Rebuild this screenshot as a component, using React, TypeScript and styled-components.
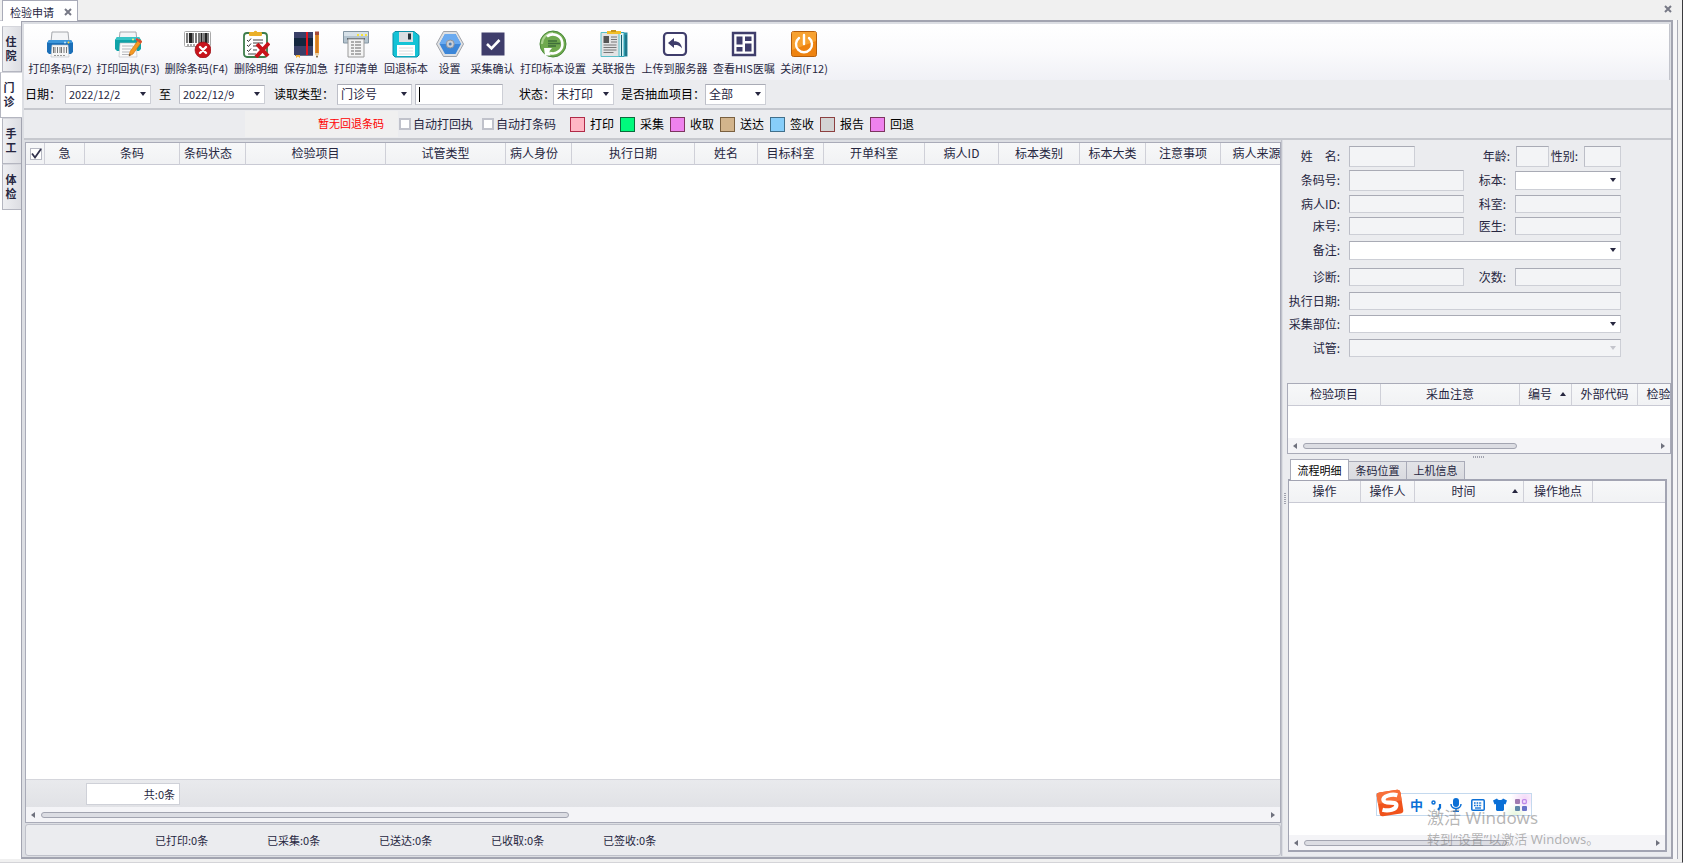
import React from "react";
import styled, { createGlobalStyle, css } from "styled-components";

const ink = "#26263f";
const line = "#a9abb8";
const panel = "#ebecef";

const GlobalStyle = createGlobalStyle`
  * { box-sizing: border-box; }
  body {
    margin: 0;
    background: #f0f0f0;
    color: ${ink};
    font: 12px/16px "Noto Sans CJK SC", "Noto Sans", sans-serif;
  }
  button, input, select { font: inherit; color: inherit; margin: 0; }
  button { border: 0; padding: 0; background: none; }
`;

/* ---------- page frame ---------- */

const Page = styled.div`
  min-height: 100vh;
  display: flex;
  flex-direction: column;
  position: relative;
  border-right: 1px solid #3a3a3e;
  border-bottom: 1px solid #d4d4d8;
`;

const TopBar = styled.header`
  height: 20px;
  display: flex;
  justify-content: space-between;
  align-items: flex-start;
  padding: 0 10px 0 2px;
`;

const DocTab = styled.div`
  height: 21px;
  width: 76px;
  display: flex;
  align-items: center;
  justify-content: space-between;
  padding: 2px 5px 0 7px;
  background: #fff;
  border: 1px solid ${line};
  border-bottom: 0;
  font-size: 11px;
  position: relative;
  z-index: 1;
`;

const CloseButton = styled.button`
  width: 8px;
  height: 18px;
  display: flex;
  align-items: center;
`;

const Body = styled.div`
  flex: 1;
  display: flex;
  padding-right: 4px;
  margin-bottom: 3px;
`;

const SideTabs = styled.nav`
  width: 21px;
  padding-top: 5px;
  background: #fff;
  border-top: 1px solid #c9cad2;
`;

const SideTab = styled.button<{ $active?: boolean }>`
  display: flex;
  align-items: center;
  justify-content: center;
  width: 19px;
  height: 46px;
  margin-left: 2px;
  padding: 0 2px 3px 0;
  font-size: 11px;
  line-height: 14px;
  font-weight: 700;
  background: linear-gradient(90deg, #eeeff2, #dcdde2);
  border: 1px solid #b4b6c0;
  border-top-color: #d5d6dc;
  border-right: 0;
  span { width: 11px; }
  ${(p) =>
    p.$active &&
    css`
      width: 22px;
      margin-left: 0;
      padding-right: 5px;
      background: #fff;
      position: relative;
    `}
`;

const Frame = styled.main`
  flex: 1;
  min-width: 0;
  display: flex;
  flex-direction: column;
  padding: 2px 0 1px 2px;
  background: #dcdee3;
  border: 2px solid #a2a4b0;
  border-left-width: 1px;
`;

const Gutter = styled.div`
  width: 5px;
  background: #f6f6f8;
  border-right: 1px solid #a9abb5;
`;

/* ---------- toolbar ---------- */

const Toolbar = styled.div`
  height: 56px;
  display: flex;
  padding: 6px 2px 0;
  margin-right: 1px;
  background: linear-gradient(#ffffff, #fafafc 50%, #f0f1f6);
  border-right: 1px solid #c3c5cd;
`;

const ToolButton = styled.button<{ $w: number }>`
  width: ${(p) => p.$w}px;
  display: flex;
  flex-direction: column;
  align-items: center;
  gap: 2px;
  font-size: 11px;
  line-height: 16px;
  white-space: nowrap;
  svg { width: 28px; height: 28px; flex: none; }
`;

/* ---------- filters ---------- */

const FilterBar = styled.form`
  height: 30px;
  display: flex;
  align-items: center;
  padding-left: 1px;
  background: ${panel};
  border-bottom: 2px solid #c6c8ce;
  color: #000;
`;

const FilterLabel = styled.label<{ $w: number; $end?: boolean }>`
  width: ${(p) => p.$w}px;
  white-space: nowrap;
  text-align: ${(p) => (p.$end ? "center" : "left")};
`;

const Field = styled.span<{ $w?: number; $h?: number; $off?: boolean }>`
  position: relative;
  display: block;
  ${(p) => (p.$w ? `width: ${p.$w}px;` : "flex: 1;")}
  height: ${(p) => p.$h ?? 18}px;
  background: ${(p) => (p.$off ? "#f3f4f6" : "#fff")};
  border: 1px solid #cdcfd6;
  border-top-color: #a9abb5;
  border-left-color: #bcbec7;
  color: ${ink};
  input, select {
    display: block;
    width: 100%;
    height: 100%;
    padding: 0 4px 0 3px;
    border: 0;
    outline: 0;
    background: none;
    appearance: none;
    line-height: 16px;
  }
`;

const DateInput = styled.input`
  font-size: 11px;
`;

const Arrow = styled.svg<{ $dim?: boolean }>`
  position: absolute;
  right: 4px;
  top: calc(50% - 2px);
  width: 6px;
  height: 4px;
  fill: ${(p) => (p.$dim ? "#c4c5cc" : ink)};
  pointer-events: none;
`;

const Caret = styled.i`
  position: absolute;
  left: 3px;
  top: 2px;
  width: 1px;
  height: 15px;
  background: #000;
`;

const Gap = styled.span<{ $w: number }>`
  width: ${(p) => p.$w}px;
`;

/* ---------- legend ---------- */

const LegendBar = styled.div`
  height: 30px;
  display: flex;
  align-items: center;
  background: ${panel};
  border-bottom: 2px solid #c6c8ce;
  padding-left: 221px;
`;

const Notice = styled.div`
  width: 153px;
  height: 26px;
  padding-right: 14px;
  background: #f0f0f0;
  color: #f00;
  font-size: 11px;
  line-height: 24px;
  text-align: right;
`;

const CheckLabel = styled.label`
  display: flex;
  align-items: center;
  gap: 2px;
  width: 83px;
  padding-left: 1px;
  white-space: nowrap;
`;

const Check = styled.input`
  appearance: none;
  flex: none;
  width: 12px;
  height: 12px;
  border: 2px solid #c0c2cb;
  background: #fff;
`;

const Legend = styled.ul`
  display: flex;
  gap: 6px;
  margin: 0 0 0 6px;
  padding: 0;
  list-style: none;
  color: #000;
`;

const LegendItem = styled.li`
  display: flex;
  align-items: center;
  gap: 5px;
  white-space: nowrap;
`;

const Swatch = styled.span<{ $fill: string; $edge: string }>`
  width: 15px;
  height: 15px;
  background: ${(p) => p.$fill};
  border: 1px solid ${(p) => p.$edge};
`;

/* ---------- work area ---------- */

const Work = styled.div`
  flex: 1;
  display: flex;
  gap: 1px;
  min-height: 0;
`;

const Left = styled.section`
  flex: 1;
  min-width: 0;
  display: flex;
  flex-direction: column;
  padding: 2px 0 0 1px;
  border-right: 1px solid #c0c2cb;
`;

const GridBox = styled.div<{ $h?: number }>`
  ${(p) => (p.$h ? `height: ${p.$h}px;` : "flex: 1;")}
  min-width: 0;
  display: flex;
  flex-direction: column;
  overflow: hidden;
  background: #fff;
  border: 1px solid ${line};
`;

const GridBody = styled.div`
  flex: 1;
  overflow: hidden;
`;

const Table = styled.table<{ $w?: number }>`
  width: ${(p) => (p.$w ? `${p.$w}px` : "100%")};
  table-layout: fixed;
  border-collapse: separate;
  border-spacing: 0;
  th {
    height: 22px;
    padding: 0 0 1px;
    font-weight: 400;
    line-height: 16px;
    white-space: nowrap;
    overflow: hidden;
    background: linear-gradient(#f7f8f9, #f1f2f4);
    border-right: 1px solid #cfd0d8;
    border-bottom: 1px solid #c9cad4;
  }
  th:last-child { border-right: 0; }
`;

const HeadCell = styled.th<{ $start?: boolean }>`
  ${(p) =>
    p.$start &&
    css`
      && {
        text-align: left;
        padding-left: 4px;
      }
    `}
`;

const HeadCheck = styled.span`
  position: relative;
  display: block;
  width: 12px;
  height: 12px;
  margin: 1px 0 0 4px;
  input {
    appearance: none;
    display: block;
    width: 12px;
    height: 12px;
    margin: 0;
    background: #fff;
    border: 1px solid #b6b8c2;
  }
  svg { position: absolute; left: 0; top: 0; pointer-events: none; }
`;

const SortHead = styled.span`
  display: flex;
  align-items: center;
  justify-content: flex-end;
  padding-right: 5px;
  b { flex: 1; font-weight: 400; text-align: center; }
  svg { width: 6px; height: 4px; fill: ${ink}; }
`;

const Summary = styled.div`
  height: 28px;
  padding: 3px 0 0 60px;
  background: linear-gradient(#e9eaed, #e1e2e6);
  border-top: 1px solid #d5d6dc;
`;

const Total = styled.div`
  width: 94px;
  height: 22px;
  padding-right: 4px;
  background: #fff;
  border: 1px solid #cfd1d8;
  font-size: 11px;
  line-height: 20px;
  text-align: right;
`;

const Scroll = styled.div`
  height: 15px;
  display: flex;
  align-items: center;
  gap: 4px;
  padding: 0 5px;
  background: #f4f4f7;
  svg { width: 4px; height: 6px; fill: #6f717d; flex: none; }
`;

const Track = styled.div`
  flex: 1;
`;

const Thumb = styled.div<{ $pct: number }>`
  width: ${(p) => p.$pct}%;
  height: 6px;
  margin-left: 2px;
  border: 1px solid #a3a5b1;
  border-radius: 3px;
  background: #dcdde3;
`;

const Status = styled.footer`
  height: 32px;
  margin-top: 1px;
  display: flex;
  align-items: center;
  padding: 0 0 1px 129px;
  background: ${panel};
  border: 1px solid #bfc1ca;
  border-radius: 3px;
  font-size: 11px;
  span { width: 112px; }
`;

/* ---------- right side ---------- */

const Right = styled.aside`
  width: 388px;
  display: flex;
  flex-direction: column;
  padding: 4px 0 4px 4px;
  background: ${panel};
  position: relative;
`;

const FormRow = styled.div<{ $h: number }>`
  height: ${(p) => p.$h}px;
  width: 334px;
  display: flex;
  align-items: center;
`;

const FormLabel = styled.label<{ $w: number; $pad?: number }>`
  width: ${(p) => p.$w}px;
  padding-right: ${(p) => p.$pad ?? 9}px;
  text-align: right;
  white-space: pre;
`;

const Details = styled.div`
  margin-top: 24px;
  display: flex;
  flex-direction: column;
`;

const HSplit = styled.div`
  height: 5px;
  display: flex;
  align-items: center;
  justify-content: center;
  &::after {
    content: "";
    width: 12px;
    height: 2px;
    background: repeating-linear-gradient(90deg, #a0a2ae 0 1px, transparent 1px 2px);
  }
`;

const VSplit = styled.div`
  position: absolute;
  left: 1px;
  top: 353px;
  width: 2px;
  height: 12px;
  background: repeating-linear-gradient(#a0a2ae 0 1px, transparent 1px 2px);
`;

const Tabs = styled.div`
  height: 20px;
  display: flex;
  align-items: flex-end;
  padding-left: 3px;
`;

const TabButton = styled.button<{ $active?: boolean }>`
  width: ${(p) => (p.$active ? 59 : 58)}px;
  height: ${(p) => (p.$active ? 21 : 18)}px;
  padding-bottom: 1px;
  font-size: 11px;
  line-height: 16px;
  background: ${(p) => (p.$active ? "#fff" : "linear-gradient(#e3e4e8, #d9dadf)")};
  border: 1px solid ${line};
  border-bottom: 0;
  ${(p) =>
    p.$active
      ? css`
          margin-bottom: -1px;
          position: relative;
          color: #000;
        `
      : css`
          border-left: 0;
        `}
`;

const FlowBox = styled(GridBox)`
  margin: 0 4px 0 1px;
  border: 2px solid #a2a4b2;
  border-left-width: 1px;
`;

/* ---------- overlays ---------- */

const ImeBar = styled.div`
  position: absolute;
  right: 150px;
  bottom: 46px;
  width: 156px;
  height: 23px;
  display: flex;
  align-items: center;
  justify-content: space-between;
  padding: 0 4px 0 33px;
  background: radial-gradient(circle at 96% 20%, #f3d9f8 0, #fff0 14px),
    radial-gradient(circle at 90% 100%, #e6f6dc 0, #fff0 12px), #fff;
  border: 1px solid #c4d9ee;
`;

const ImeLogo = styled.svg`
  position: absolute;
  left: -1px;
  top: -5px;
`;

const ImeMode = styled.span`
  color: #0a6fd6;
  font-weight: 700;
  font-size: 13px;
  line-height: 16px;
`;

const Watermark = styled.div`
  position: absolute;
  right: 76px;
  bottom: 13px;
  width: 179px;
  color: rgba(120, 120, 120, 0.55);
  white-space: nowrap;
  pointer-events: none;
  font-family: "Noto Sans", "Noto Sans CJK SC", sans-serif;
  p { margin: 0; font-size: 17px; line-height: 22px; }
  p + p { font-size: 13px; line-height: 20px; }
`;

/* ---------- icons ---------- */

const svg = (children: React.ReactNode) => (
  <svg viewBox="0 0 28 28" aria-hidden="true">{children}</svg>
);

const icons: Record<string, React.ReactNode> = {
  barcodePrint: svg(
    <>
      <path d="M6 2h16l1 10H5z" fill="#f4f5f7" stroke="#a6a9ae" />
      <path d="M3 10h22l2 3v9l-2 2H3l-2-2v-9z" fill="#1b6fb8" />
      <path d="M3 10h22l2 3H1z" fill="#3c96da" />
      <circle cx="19" cy="12.500" r="1" fill="#bfe4ff" /><circle cx="22.500" cy="12.500" r="1" fill="#ffd23c" />
      <path d="M6 15h16l1 12H5z" fill="#f6f6f6" stroke="#b9bcc2" strokeWidth=".6" />
      <path d="M7.500 17v6M9 17v6M11.500 17v6M14 17v6M15.500 17v6M18 17v6M20.500 17v6" stroke="#777" />
      <path d="M8 25.500h12" stroke="#999" strokeDasharray="2 1" />
    </>
  ),
  receiptPrint: svg(
    <>
      <path d="M6 2h16l1 9H5z" fill="#f4f5f7" stroke="#a6a9ae" />
      <path d="M3 7h22l2 3v9l-2 2H3l-2-2v-9z" fill="#0fa3a8" />
      <path d="M3 7h22l2 3H1z" fill="#39c4c6" />
      <circle cx="19" cy="9.500" r="1" fill="#fff07a" /><circle cx="23" cy="9.500" r="1.200" fill="#e33" />
      <path d="M6 13h16l1 14H5z" fill="#fafafa" stroke="#b9bcc2" strokeWidth=".6" />
      <path d="M8 16h11M8 19h9M8 22h7M8 24.500h9" stroke="#b5b7bc" />
      <path d="M25 9l3 2.500L19 24l-4 2 1-4.500z" fill="#f59a23" stroke="#c06a10" strokeWidth=".6" />
      <path d="M25 9l3 2.500-1.500 2-3-2.500z" fill="#d94a3a" /><path d="M15 26l.5-2 1.200 1z" fill="#333" />
    </>
  ),
  barcodeDelete: svg(
    <>
      <rect x="1.500" y="1.500" width="26" height="15" rx="1" fill="#fff" stroke="#a9a9a9" />
      <path d="M4 3v10M6.500 3v10M10 3v10M13 3v10M16 3v10M21 3v10M25 3v10" stroke="#222" strokeWidth="1.200" />
      <path d="M8 3v10M18.500 3v10M23 3v10" stroke="#222" strokeWidth="2" />
      <path d="M4 15h9" stroke="#555" strokeDasharray="2 1" />
      <circle cx="20" cy="20" r="8" fill="#c8141c" stroke="#8c0c12" strokeWidth=".6" />
      <path d="M17 17l6 6M23 17l-6 6" stroke="#fff" strokeWidth="2.400" strokeLinecap="round" />
    </>
  ),
  detailDelete: svg(
    <>
      <rect x="2" y="3" width="23" height="24" rx="3" fill="#fff" stroke="#3d7d4b" strokeWidth="1.800" />
      <rect x="7" y="2" width="13" height="4" rx="1" fill="#eab02a" /><circle cx="13.500" cy="2.500" r="1.800" fill="#eab02a" />
      <path d="M5 10l1.500 1.500L9 8.500M5 15l1.500 1.500L9 13.500M5 20l1.500 1.500L9 18.500" fill="none" stroke="#333" />
      <path d="M11 10h10M11 13h10M11 16h5M11 20h4M6 24h8" stroke="#444" strokeWidth="1.200" />
      <path d="M15 14l11 12M27 13L14 27" stroke="#c9141a" strokeWidth="4" />
    </>
  ),
  urgentSave: svg(
    <>
      <path d="M2 2h19v23H2z" fill="#3a4068" /><path d="M2 8h19v8H2z" fill="#14273f" />
      <path d="M15 2v23" stroke="#e8131d" strokeWidth="2" /><path d="M3 25h18v1H3z" fill="#6b6f86" />
      <path d="M4 25h4v3l-2-1.500L4 28z" fill="#f4b23a" />
      <path d="M23 4h4v19l-2 5-2-5z" fill="#e8912a" /><path d="M25 4v19" stroke="#b9651a" />
      <path d="M23 1.500h4V5h-4z" fill="#a64a3a" /><path d="M23 23h4l-2 5z" fill="#e8d2a8" /><path d="M24.300 26h1.400l-.7 2z" fill="#222" />
    </>
  ),
  listPrint: svg(
    <>
      <path d="M1.500 1.500h25V13h-25z" fill="#b5c4cf" stroke="#8496a3" />
      <path d="M2 2h24v4H2z" fill="#d7e1e8" /><path d="M15 5h2M19 5h2M23 5h2" stroke="#f6e23c" strokeWidth="2" />
      <path d="M5 9h18" stroke="#5c6a75" strokeWidth="2" />
      <path d="M6 9h16v18H6z" fill="#f4f4f4" stroke="#9a9a9a" />
      <path d="M9 12h3M13 12h6M9 15h3M13 15h6M9 18h3M13 18h6M9 21h3M13 21h6M9 24h3M13 24h6" stroke="#666" strokeWidth="1.200" />
    </>
  ),
  specimenBack: svg(
    <>
      <path d="M3 1.500h19l5 4V25l-2 2H3l-2-2V3.500z" fill="#14c3d6" stroke="#0a8ea6" />
      <path d="M7 2h14v10H7z" fill="#d9dee2" /><path d="M16 3.500h3v6h-3z" fill="#25323b" />
      <path d="M5 15h18v11H5z" fill="#fff" /><path d="M7 18h14M7 21h14M7 24h14" stroke="#d9dbde" />
    </>
  ),
  settings: svg(
    <>
      <path d="M7.500 1.500h13L27.500 14l-7 12.500h-13L.5 14z" fill="#dfe1e4" stroke="#9fa2a8" />
      <path d="M9 4h10.500L25 14l-5.500 10H9L3.500 14z" fill="#3c86d8" />
      <path d="M9 4h10.500L25 14H3.500z" fill="#6aaaf0" />
      <circle cx="14.200" cy="14" r="4" fill="#c9ced6" stroke="#8e949e" /><circle cx="14.200" cy="14" r="1.500" fill="#4b7fb8" />
    </>
  ),
  collectOk: svg(
    <>
      <path d="M2.500 2.500h23v23h-23z" fill="#3f3d6b" />
      <path d="M8 14l4.500 4.500L20.500 10" fill="none" stroke="#fff" strokeWidth="2.600" />
    </>
  ),
  specimenPrint: svg(
    <>
      <circle cx="14" cy="14" r="13" fill="#6fa94e" stroke="#4a8a3a" />
      <path d="M3 14A11 11 0 0 1 14 3" fill="none" stroke="#a9d18e" strokeWidth="2" />
      <path d="M8 6.500A9.500 9.500 0 1 1 11 23" fill="none" stroke="#fff" strokeWidth="2.600" />
      <path d="M5 18h8l-2.500 3 1 4.500H6z" fill="#fff" />
      <path d="M9 11h9M9 13.500h12M9 16h8" stroke="#3f6f3a" strokeWidth="1.400" />
    </>
  ),
  reports: svg(
    <>
      <path d="M9 2.500h18.500v24H9z" fill="#2b8fa3" /><path d="M7 2.500h17v24H7z" fill="#d8f1f4" stroke="#2fa5b8" />
      <path d="M1 2.500h18v24H1z" fill="#e2e3e4" stroke="#59bfc9" />
      <path d="M7 1h14v3H7z" fill="#f0bf2a" /><path d="M11 0h5v2h-5z" fill="#c9951a" />
      <path d="M3.500 6h5.500v7H3.500z" fill="#555" /><path d="M11 7h6M11 9.500h6M11 12h6M3.500 15h13M3.500 17.500h13M3.500 20h13M3.500 22.500h10" stroke="#777" />
      <path d="M21.500 5v21M26 5v21" stroke="#175f70" />
    </>
  ),
  upload: svg(
    <>
      <rect x="3" y="3" width="22" height="22" rx="3.500" fill="#fff" stroke="#3f3d6b" strokeWidth="2.200" />
      <path d="M7 13l6-5v3.200c5 0 7.500 2.500 8 7.300-2-2.800-4-3.500-8-3.500v3z" fill="#3f3d6b" />
    </>
  ),
  orders: svg(
    <>
      <path d="M3 3h22v22H3z" fill="#fff" stroke="#3f3d6b" strokeWidth="2.400" />
      <path d="M6.500 6.500h6v8h-6zM6.500 17h6v4.500h-6zM15 6.500h6.500V11H15zM15 13.500h6.500v8H15z" fill="#3f3d6b" />
    </>
  ),
  power: svg(
    <>
      <rect x="1.500" y="1.500" width="25" height="25" rx="2" fill="#ee8310" stroke="#b65f0c" />
      <path d="M2 2h24v9L2 20z" fill="#f7a130" />
      <path d="M9 8a8 8 0 1 0 10 0M14 5v9" fill="none" stroke="#fff" strokeWidth="2.400" strokeLinecap="round" />
    </>
  ),
};

const tools: [string, string, number][] = [
  ["打印条码(F2)", "barcodePrint", 68],
  ["打印回执(F3)", "receiptPrint", 68],
  ["删除条码(F4)", "barcodeDelete", 69],
  ["删除明细", "detailDelete", 50],
  ["保存加急", "urgentSave", 50],
  ["打印清单", "listPrint", 50],
  ["回退标本", "specimenBack", 50],
  ["设置", "settings", 37],
  ["采集确认", "collectOk", 49],
  ["打印标本设置", "specimenPrint", 72],
  ["关联报告", "reports", 49],
  ["上传到服务器", "upload", 73],
  ["查看HIS医嘱", "orders", 66],
  ["关闭(F12)", "power", 54],
];

const legend: [string, string, string][] = [
  ["打印", "#ffb6c4", "#b02a48"],
  ["采集", "#00fa7d", "#0a6b3c"],
  ["收取", "#ee82ee", "#7d3560"],
  ["送达", "#d2b48c", "#7a6040"],
  ["签收", "#87cefa", "#41708c"],
  ["报告", "#d3d3d3", "#8c4040"],
  ["回退", "#ee82ee", "#7d3560"],
];

const mainColumns: [string, number, boolean?][] = [
  ["急", 40], ["条码", 95], ["条码状态", 66, true], ["检验项目", 140], ["试管类型", 120],
  ["病人身份", 66, true], ["执行日期", 123], ["姓名", 63], ["目标科室", 66], ["开单科室", 101],
  ["病人ID", 74], ["标本类别", 81], ["标本大类", 66], ["注意事项", 75], ["病人来源", 71],
];

const Down = ({ dim }: { dim?: boolean }) => (
  <Arrow $dim={dim} viewBox="0 0 6 4"><path d="M0 0h6L3 4z" /></Arrow>
);

const Cross = () => (
  <svg width="8" height="8" viewBox="0 0 8 8" aria-hidden="true">
    <path d="M1 1l6 6M7 1L1 7" stroke="#777986" strokeWidth="2" />
  </svg>
);

const Up = () => <svg viewBox="0 0 6 4"><path d="M0 4h6L3 0z" /></svg>;

function Scrollbar({ pct }: { pct: number }) {
  return (
    <Scroll>
      <svg viewBox="0 0 4 6"><path d="M4 0v6L0 3z" /></svg>
      <Track><Thumb $pct={pct} /></Track>
      <svg viewBox="0 0 4 6"><path d="M0 0v6l4-3z" /></svg>
    </Scroll>
  );
}

function Select({ id, value, w, h, off }: { id: string; value?: string; w?: number; h?: number; off?: boolean }) {
  return (
    <Field $w={w} $h={h} $off={off}>
      <select id={id} disabled={off}><option>{value ?? ""}</option></select>
      <Down dim={off} />
    </Field>
  );
}

function ReadOnly({ id, w, h }: { id: string; w?: number; h?: number }) {
  return <Field $w={w} $h={h} $off><input id={id} readOnly /></Field>;
}

export default function App() {
  return (
    <Page>
      <GlobalStyle />
      <TopBar>
        <DocTab>检验申请<CloseButton aria-label="关闭标签"><Cross /></CloseButton></DocTab>
        <CloseButton aria-label="关闭窗口"><Cross /></CloseButton>
      </TopBar>
      <Body>
        <SideTabs>
          <SideTab><span>住院</span></SideTab>
          <SideTab $active><span>门诊</span></SideTab>
          <SideTab><span>手工</span></SideTab>
          <SideTab><span>体检</span></SideTab>
        </SideTabs>
        <Frame>
          <Toolbar>
            {tools.map(([label, icon, w]) => (
              <ToolButton key={label} type="button" $w={w}>{icons[icon]}{label}</ToolButton>
            ))}
          </Toolbar>
          <FilterBar>
            <FilterLabel htmlFor="from" $w={40}>日期：</FilterLabel>
            <Field $w={86} $h={19}><DateInput id="from" defaultValue="2022/12/2" /><Down /></Field>
            <FilterLabel htmlFor="to" $w={28} $end>至</FilterLabel>
            <Field $w={86} $h={19}><DateInput id="to" defaultValue="2022/12/9" /><Down /></Field>
            <Gap $w={9} />
            <FilterLabel htmlFor="kind" $w={63}>读取类型：</FilterLabel>
            <Select id="kind" value="门诊号" w={75} h={21} />
            <Gap $w={3} />
            <Field $w={88} $h={21}><input aria-label="门诊号" /><Caret /></Field>
            <Gap $w={16} />
            <FilterLabel htmlFor="state" $w={34}>状态：</FilterLabel>
            <Select id="state" value="未打印" w={61} h={21} />
            <Gap $w={7} />
            <FilterLabel htmlFor="blood" $w={84}>是否抽血项目：</FilterLabel>
            <Select id="blood" value="全部" w={61} h={21} />
          </FilterBar>
          <LegendBar>
            <Notice>暂无回退条码</Notice>
            <CheckLabel><Check type="checkbox" />自动打回执</CheckLabel>
            <CheckLabel><Check type="checkbox" />自动打条码</CheckLabel>
            <Legend>
              {legend.map(([label, fill, edge]) => (
                <LegendItem key={label}><Swatch $fill={fill} $edge={edge} />{label}</LegendItem>
              ))}
            </Legend>
          </LegendBar>
          <Work>
            <Left>
              <GridBox>
                <GridBody>
                  <Table $w={1266}>
                    <colgroup>
                      <col width={19} />
                      {mainColumns.map(([name, w]) => <col key={name} width={w} />)}
                    </colgroup>
                    <thead>
                      <tr>
                        <th>
                          <HeadCheck>
                            <input type="checkbox" aria-label="全选" defaultChecked />
                            <svg width="12" height="12" viewBox="0 0 12 12">
                              <path d="M2 5.500l3 4L11 1" fill="none" stroke="#33334d" strokeWidth="1.800" />
                            </svg>
                          </HeadCheck>
                        </th>
                        {mainColumns.map(([name, , start]) => (
                          <HeadCell key={name} $start={start}>{name}</HeadCell>
                        ))}
                      </tr>
                    </thead>
                  </Table>
                </GridBody>
                <Summary><Total>共:0条</Total></Summary>
                <Scrollbar pct={43} />
              </GridBox>
              <Status>
                <span>已打印:0条</span>
                <span>已采集:0条</span>
                <span>已送达:0条</span>
                <span>已收取:0条</span>
                <span>已签收:0条</span>
              </Status>
            </Left>
            <Right>
              <VSplit />
              <FormRow $h={24}>
                <FormLabel htmlFor="name" $w={62}>{"姓　名:"}</FormLabel>
                <ReadOnly id="name" w={66} h={21} />
                <FormLabel htmlFor="age" $w={101} $pad={6}>年龄:</FormLabel>
                <ReadOnly id="age" w={33} h={21} />
                <FormLabel htmlFor="sex" $w={35} $pad={6}>性别:</FormLabel>
                <ReadOnly id="sex" w={37} h={21} />
              </FormRow>
              <FormRow $h={24}>
                <FormLabel htmlFor="code" $w={62}>条码号:</FormLabel>
                <ReadOnly id="code" w={115} h={21} />
                <FormLabel htmlFor="sample" $w={51}>标本:</FormLabel>
                <Select id="sample" h={19} />
              </FormRow>
              <FormRow $h={23}>
                <FormLabel htmlFor="pid" $w={62}>病人ID:</FormLabel>
                <ReadOnly id="pid" w={115} />
                <FormLabel htmlFor="dept" $w={51}>科室:</FormLabel>
                <ReadOnly id="dept" />
              </FormRow>
              <FormRow $h={22}>
                <FormLabel htmlFor="bed" $w={62}>床号:</FormLabel>
                <ReadOnly id="bed" w={115} />
                <FormLabel htmlFor="doctor" $w={51}>医生:</FormLabel>
                <ReadOnly id="doctor" />
              </FormRow>
              <FormRow $h={26}>
                <FormLabel htmlFor="note" $w={62}>备注:</FormLabel>
                <Select id="note" h={19} />
              </FormRow>
              <FormRow $h={28}>
                <FormLabel htmlFor="diag" $w={62}>诊断:</FormLabel>
                <ReadOnly id="diag" w={115} />
                <FormLabel htmlFor="times" $w={51}>次数:</FormLabel>
                <ReadOnly id="times" />
              </FormRow>
              <FormRow $h={20}>
                <FormLabel htmlFor="exec" $w={62}>执行日期:</FormLabel>
                <ReadOnly id="exec" />
              </FormRow>
              <FormRow $h={26}>
                <FormLabel htmlFor="site" $w={62}>采集部位:</FormLabel>
                <Select id="site" />
              </FormRow>
              <FormRow $h={22}>
                <FormLabel htmlFor="tube" $w={62}>试管:</FormLabel>
                <Select id="tube" off />
              </FormRow>
              <Details>
                <GridBox $h={71}>
                  <GridBody>
                    <Table $w={415}>
                      <colgroup>
                        <col width={93} /><col width={139} /><col width={52} /><col width={66} /><col width={65} />
                      </colgroup>
                      <thead>
                        <tr>
                          <th>检验项目</th>
                          <th>采血注意</th>
                          <th><SortHead><b>编号</b><Up /></SortHead></th>
                          <th>外部代码</th>
                          <th>检验部位</th>
                        </tr>
                      </thead>
                    </Table>
                  </GridBody>
                  <Scrollbar pct={60} />
                </GridBox>
              </Details>
              <HSplit />
              <Tabs role="tablist">
                <TabButton role="tab" $active>流程明细</TabButton>
                <TabButton role="tab">条码位置</TabButton>
                <TabButton role="tab">上机信息</TabButton>
              </Tabs>
              <FlowBox>
                <GridBody>
                  <Table>
                    <colgroup>
                      <col width={72} /><col width={54} /><col width={109} /><col width={69} /><col />
                    </colgroup>
                    <thead>
                      <tr>
                        <th>操作</th>
                        <th>操作人</th>
                        <th><SortHead><b>时间</b><Up /></SortHead></th>
                        <th>操作地点</th>
                        <th />
                      </tr>
                    </thead>
                  </Table>
                </GridBody>
                <Scrollbar pct={58} />
              </FlowBox>
            </Right>
          </Work>
        </Frame>
        <Gutter />
      </Body>
      <ImeBar>
        <ImeLogo width="28" height="28" viewBox="0 0 28 28" aria-hidden="true">
          <g transform="rotate(-9 14 14)">
            <rect x="2" y="2" width="24" height="24" rx="3" fill="#f0531c" />
            <path d="M2 5a3 3 0 0 1 3-3h18a3 3 0 0 1 3 3v8H2z" fill="#f8703a" />
            <path d="M22.500 7.500C17 5 7.500 6 8 10.500S20.500 12.500 20 17 11 22 5.500 19.500" fill="none" stroke="#fff" strokeWidth="4.200" />
          </g>
        </ImeLogo>
        <ImeMode>中</ImeMode>
        <svg width="11" height="12" viewBox="0 0 11 12" aria-hidden="true">
          <circle cx="2.500" cy="3.500" r="1.500" fill="none" stroke="#0a6fd6" strokeWidth="1.500" />
          <path d="M9 5v3.500L7 11" fill="none" stroke="#0a6fd6" strokeWidth="2.200" />
        </svg>
        <svg width="12" height="14" viewBox="0 0 12 14" aria-hidden="true">
          <rect x="3" y="0" width="6" height="9" rx="3" fill="#0a6fd6" />
          <path d="M1 6c0 6 10 6 10 0M6 10v4M3 13.500h6" fill="none" stroke="#0a6fd6" strokeWidth="1.500" />
        </svg>
        <svg width="14" height="12" viewBox="0 0 14 12" aria-hidden="true">
          <rect x=".8" y=".8" width="12.400" height="10.400" rx="1" fill="none" stroke="#0a6fd6" strokeWidth="1.500" />
          <path d="M3 4h8M3 6.500h8" stroke="#0a6fd6" strokeWidth="1.500" strokeDasharray="1.600 1" />
          <path d="M4 9h6" stroke="#0a6fd6" strokeWidth="1.300" />
        </svg>
        <svg width="14" height="13" viewBox="0 0 14 13" aria-hidden="true">
          <path d="M0 2.500L4 .5c1 2 5 2 6 0l4 2-1.500 4-1.500-.5V12l-1 1H4l-1-1V6l-1.500.5z" fill="#0a6fd6" />
        </svg>
        <svg width="12" height="12" viewBox="0 0 12 12" aria-hidden="true">
          <rect width="5" height="5" rx="1" fill="#a07ab0" />
          <rect x="7.500" y=".7" width="3.800" height="3.800" rx="1" fill="none" stroke="#c08ae8" strokeWidth="1.300" />
          <rect y="7" width="5" height="5" rx="1" fill="#5f86a8" />
          <rect x="7" y="7" width="5" height="5" rx="1" fill="#6a72c8" />
        </svg>
      </ImeBar>
      <Watermark>
        <p>激活 Windows</p>
        <p>转到“设置”以激活 Windows。</p>
      </Watermark>
    </Page>
  );
}
